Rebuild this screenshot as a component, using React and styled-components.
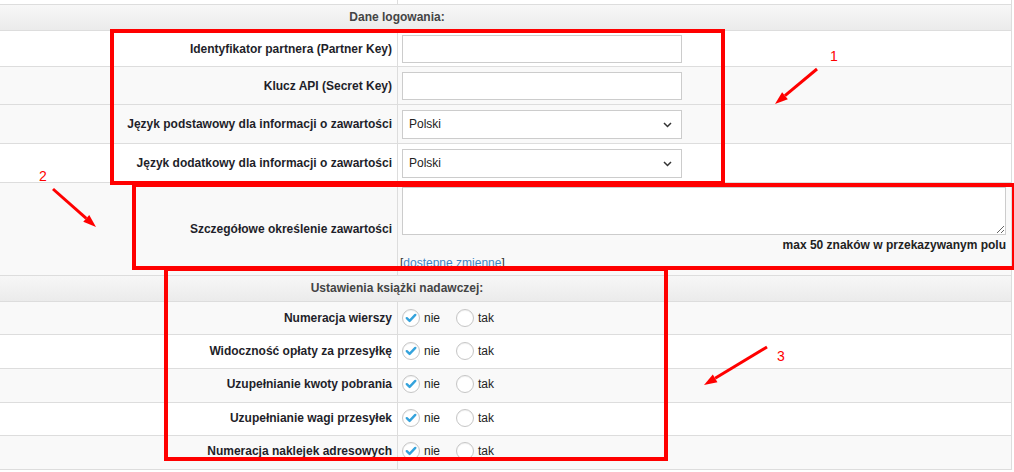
import styled, { createGlobalStyle } from "styled-components"

const Global = createGlobalStyle`
    html, body {
        margin: 0;
        padding: 0;
        background: #fff;
        overflow: hidden;
    }
    body {
        font-family: "Liberation Sans", Arial, sans-serif;
        font-size: 12px;
        color: #222;
    }
`

const Page = styled.div`
    position: relative;
    width: 1014px;
    height: 472px;
    overflow: hidden;
`
const Table = styled.div`
    width: 1012px;
    border-right: 1px solid #ddd;
    box-sizing: border-box;
`
const Row = styled.div`
    display: grid;
    grid-template-columns: 398px 1fr;
    height: ${(p) => p.h}px;
    background: ${(p) => (p.gray ? "#f9f9f9" : "#fff")};
    border-bottom: 1px solid #ddd;
`
const Label = styled.div`
    display: flex;
    align-items: center;
    justify-content: flex-end;
    padding-right: 5px;
    padding-bottom: ${(p) => p.lift || 0}px;
    border-right: 1px solid #ddd;
    font-weight: bold;
    color: #1f1f2a;
    white-space: nowrap;
`
const Field = styled.div`
    display: flex;
    align-items: center;
    padding-left: 4px;
    padding-bottom: ${(p) => p.lift || 0}px;
`
const FieldStack = styled.div`
    display: flex;
    flex-direction: column;
    padding: 4px 5px 0 4px;
`
const Header = styled.div`
    height: 25px;
    line-height: 25px;
    padding-right: 217px;
    text-align: center;
    font-weight: bold;
    color: #444;
    background: linear-gradient(#f7f7f7, #ebebeb);
    border-bottom: 1px solid #ddd;
`
const TextInput = styled.input`
    box-sizing: border-box;
    width: 280px;
    height: 28px;
    border: 1px solid #ccc;
    background: #fff;
    outline: none;
    font: 12px "Liberation Sans", Arial, sans-serif;
`
const SelectWrap = styled.div`
    position: relative;
    width: 280px;
    height: 29px;
    svg {
        position: absolute;
        right: 10px;
        top: 12px;
        pointer-events: none;
    }
`
const Select = styled.select`
    box-sizing: border-box;
    width: 100%;
    height: 100%;
    border: 1px solid #ccc;
    border-radius: 0;
    background: #fff;
    padding: 0 0 0 6px;
    appearance: none;
    -webkit-appearance: none;
    color: #222;
    outline: none;
    font: 12px "Liberation Sans", Arial, sans-serif;
`
const TextArea = styled.textarea`
    box-sizing: border-box;
    width: 604px;
    height: 48px;
    border: 1px solid #ccc;
    background: #fff;
    outline: none;
    font: 12px "Liberation Sans", Arial, sans-serif;
`
const Hint = styled.div`
    margin-top: 3px;
    text-align: right;
    font-weight: bold;
    line-height: 14px;
    color: #222;
`
const Vars = styled.div`
    margin-top: 4px;
    margin-left: -2px;
    line-height: 14px;
    color: #333;
    a {
        color: #3d86c6;
        text-decoration: none;
    }
`
const RadioGroup = styled.div`
    display: flex;
    align-items: center;
`
const RadioOption = styled.label`
    display: flex;
    align-items: center;
    gap: 4px;
    margin-right: 16px;
    color: #222;
`
const Circle = styled.span`
    display: inline-flex;
    align-items: center;
    justify-content: center;
    width: 18px;
    height: 18px;
    box-sizing: border-box;
    border: 1px solid #c6c6c6;
    border-radius: 50%;
    background: #fff;
    box-shadow: inset 0 1px 1px rgba(0, 0, 0, 0.06);
`

const Box = styled.div`
    position: absolute;
    left: ${(p) => p.x}px;
    top: ${(p) => p.y}px;
    width: ${(p) => p.w}px;
    height: ${(p) => p.hh}px;
    border: 4px solid #ff0000;
    box-sizing: border-box;
    pointer-events: none;
`
const Num = styled.span`
    position: absolute;
    left: ${(p) => p.x}px;
    top: ${(p) => p.y}px;
    font-family: "Liberation Sans", Arial, sans-serif;
    font-size: 14px;
    line-height: 14px;
    color: #ff0000;
`
const Overlay = styled.svg`
    position: absolute;
    left: 0;
    top: 0;
    pointer-events: none;
`

function Radio({ checked, children }) {
    return (
        <RadioOption>
            <Circle>
                {checked && (
                    <svg width="12" height="12" viewBox="0 0 12 12">
                        <path d="M1.8 6.2 L4.6 8.9 L10.3 2.9" fill="none" stroke="#35a3dc" strokeWidth="2.4" strokeLinecap="round" strokeLinejoin="round" />
                    </svg>
                )}
            </Circle>
            {children}
        </RadioOption>
    )
}

function LangSelect() {
    return (
        <SelectWrap>
            <Select defaultValue="pl">
                <option value="pl">Polski</option>
                <option value="en">English</option>
            </Select>
            <svg width="9" height="6" viewBox="0 0 9 6">
                <path d="M1 1 L4.5 4.5 L8 1" fill="none" stroke="#333" strokeWidth="1.5" />
            </svg>
        </SelectWrap>
    )
}

function Arrow({ x1, y1, x2, y2 }) {
    const a = Math.atan2(y2 - y1, x2 - x1)
    const len = 13
    const wing = 4.5
    const bx = x2 - Math.cos(a) * len
    const by = y2 - Math.sin(a) * len
    const px = -Math.sin(a) * wing
    const py = Math.cos(a) * wing
    return (
        <g>
            <line x1={x1} y1={y1} x2={bx} y2={by} stroke="#ff0000" strokeWidth="3" />
            <polygon points={`${x2},${y2} ${bx + px},${by + py} ${bx - px},${by - py}`} fill="#ff0000" />
        </g>
    )
}

const yesNo = [
    "Numeracja wierszy",
    "Widoczność opłaty za przesyłkę",
    "Uzupełnianie kwoty pobrania",
    "Uzupełnianie wagi przesyłek",
    "Numeracja naklejek adresowych",
]
const yesNoHeights = [32, 33, 33, 32, 33]

function App() {
    return (
        <Page>
            <Global />
            <Table>
                <Row h={4}>
                    <Label />
                    <Field />
                </Row>
                <Header>Dane logowania:</Header>
                <Row h={35}>
                    <Label>Identyfikator partnera (Partner Key)</Label>
                    <Field><TextInput /></Field>
                </Row>
                <Row h={37} gray>
                    <Label>Klucz API (Secret Key)</Label>
                    <Field><TextInput /></Field>
                </Row>
                <Row h={38} gray>
                    <Label>Język podstawowy dla informacji o zawartości</Label>
                    <Field><LangSelect /></Field>
                </Row>
                <Row h={38}>
                    <Label>Język dodatkowy dla informacji o zawartości</Label>
                    <Field><LangSelect /></Field>
                </Row>
                <Row h={92} gray>
                    <Label>Szczegółowe określenie zawartości</Label>
                    <FieldStack>
                        <TextArea />
                        <Hint>max 50 znaków w przekazywanym polu</Hint>
                        <Vars>[<a href="#">dostepne zmienne</a>]</Vars>
                    </FieldStack>
                </Row>
                <Header>Ustawienia książki nadawczej:</Header>
                {yesNo.map((label, i) => (
                    <Row key={label} h={yesNoHeights[i]} gray={i % 2 === 0}>
                        <Label lift={i > 1 ? 3 : 1}>{label}</Label>
                        <Field lift={i > 1 ? 3 : 1}>
                            <RadioGroup>
                                <Radio checked>nie</Radio>
                                <Radio>tak</Radio>
                            </RadioGroup>
                        </Field>
                    </Row>
                ))}
            </Table>

            <Box x={110} y={29} w={615} hh={156} />
            <Box x={132} y={183} w={884} hh={87} />
            <Box x={164} y={267} w={504} hh={194} />
            <Overlay width="1014" height="472">
                <Arrow x1={817} y1={69} x2={775} y2={104} />
                <Arrow x1={53} y1={189} x2={96} y2={227} />
                <Arrow x1={767} y1={347} x2={704} y2={385} />
            </Overlay>
            <Num x={830} y={49}>1</Num>
            <Num x={39} y={169}>2</Num>
            <Num x={777} y={349}>3</Num>
        </Page>
    )
}

export default App
